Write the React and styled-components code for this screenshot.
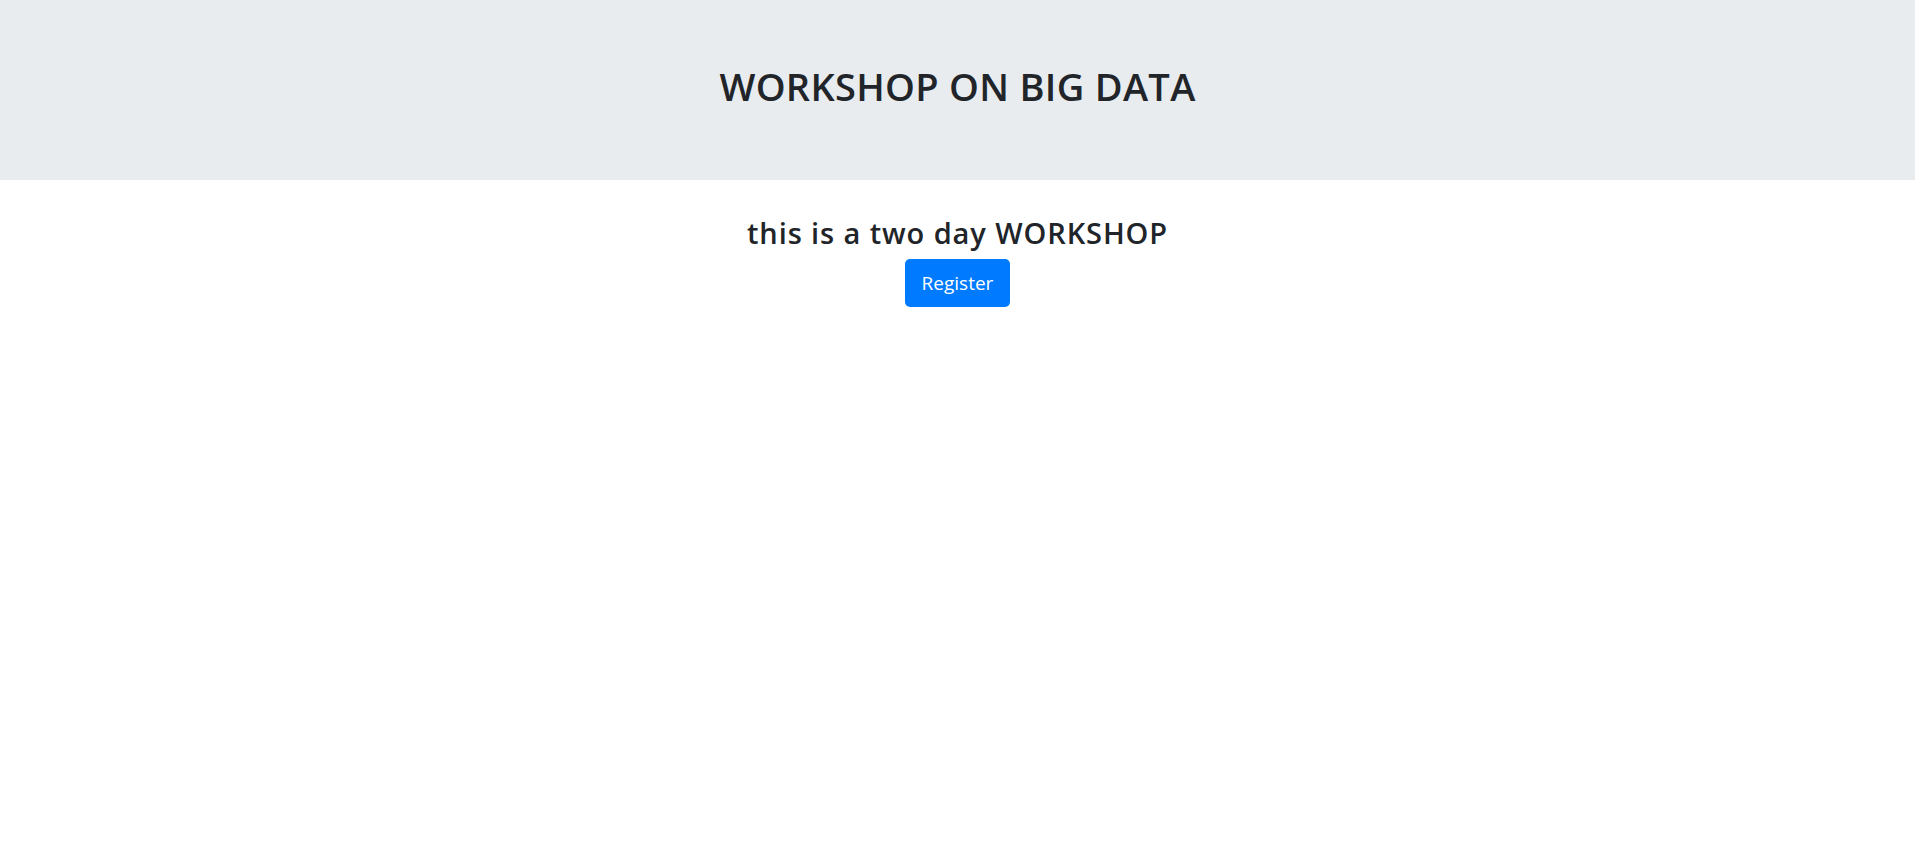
import React from 'react'
import styled, { createGlobalStyle } from 'styled-components'

const GlobalStyle = createGlobalStyle`
  body {
    margin: 0;
    background: #fff;
    color: #212529;
    font-family: "Open Sans", "Noto Sans", Arial, sans-serif;
  }
`

const Jumbotron = styled.header`
  background: #e9ecef;
  height: 180px;
  box-sizing: border-box;
  padding-top: 64px;
  text-align: center;
`

const Title = styled.h1`
  margin: 0;
  font-size: 38px;
  line-height: 44px;
  font-weight: 600;
  letter-spacing: 0.3px;
`

const Main = styled.main`
  display: flex;
  flex-direction: column;
  align-items: center;
  padding-top: 36px;
`

const Subtitle = styled.h3`
  margin: 0 0 9px;
  font-size: 29px;
  line-height: 34px;
  font-weight: 600;
  letter-spacing: 0.9px;
`

const Button = styled.button`
  width: 105px;
  height: 48px;
  border: none;
  border-radius: 5px;
  background: #007bff;
  color: #fff;
  font-family: inherit;
  font-size: 19px;
  cursor: pointer;
`

export default function App() {
  return (
    <>
      <GlobalStyle />
      <Jumbotron>
        <Title>WORKSHOP ON BIG DATA</Title>
      </Jumbotron>
      <Main>
        <Subtitle>this is a two day WORKSHOP</Subtitle>
        <Button type="button">Register</Button>
      </Main>
    </>
  )
}
